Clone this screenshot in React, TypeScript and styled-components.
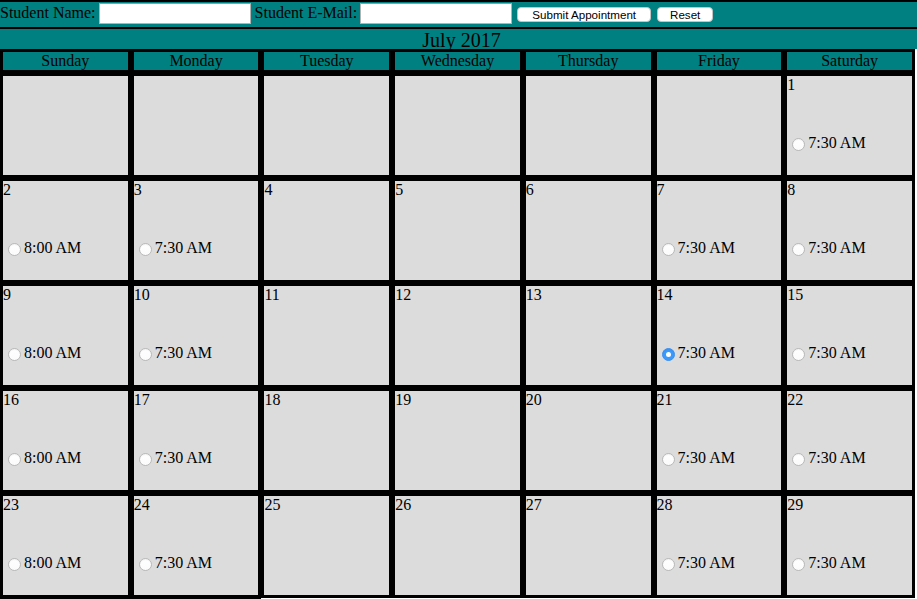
import React, { useState } from "react";
import styled, { createGlobalStyle } from "styled-components";

const GlobalStyle = createGlobalStyle`
  html, body {
    margin: 0;
    padding: 0;
    background: #ffffff;
  }
  body {
    font-family: "Liberation Serif", "Times New Roman", serif;
    font-size: 16px;
    color: #000;
  }
`;

const TEAL = "#008080";

const Page = styled.div`
  width: 917px;
`;

const TopBar = styled.form`
  display: flex;
  align-items: flex-start;
  height: 25px;
  background: ${TEAL};
  border-top: 2px solid #000;
  border-bottom: 2px solid #000;
  margin: 0;
`;

const Label = styled.label<{ $ml?: number }>`
  margin-top: 2px;
  margin-left: ${(p) => p.$ml ?? 0}px;
  line-height: 18px;
  white-space: nowrap;
  font-size: 16px;
`;

const TextInput = styled.input<{ $ml?: number }>`
  box-sizing: border-box;
  width: 152px;
  height: 21px;
  margin: 1px 0 0 ${(p) => p.$ml ?? 0}px;
  padding: 0 3px;
  border: 1px solid #b3b3b3;
  border-top-color: #9a9a9a;
  background: #fff;
  font-family: "Liberation Serif", serif;
  font-size: 14px;
  outline: none;
`;

const Button = styled.button<{ $w: number; $ml: number }>`
  box-sizing: border-box;
  width: ${(p) => p.$w}px;
  height: 15px;
  margin: 5px 0 0 ${(p) => p.$ml}px;
  padding: 0;
  border: 1px solid #c4c4c4;
  border-radius: 4px;
  background: #ffffff;
  color: #000;
  font-family: "Liberation Sans", Arial, sans-serif;
  font-size: 11.6px;
  line-height: 13px;
  text-align: center;
  cursor: pointer;
`;

const Title = styled.div`
  height: 20px;
  line-height: 23px;
  padding-left: 6px;
  background: ${TEAL};
  text-align: center;
  font-size: 20px;
  overflow: visible;
  position: relative;
  z-index: 1;
`;

const Grid = styled.div`
  display: grid;
  grid-template-columns: repeat(7, 1fr);
  width: 915px;
`;

const HeadCell = styled.div`
  height: 18px;
  line-height: 18px;
  border: 3px solid #000;
  background: ${TEAL};
  text-align: center;
  font-size: 16px;
  overflow: hidden;
  white-space: nowrap;
`;

const DayCell = styled.div`
  height: 99px;
  border: 3px solid #000;
  background: #dcdcdc;
  display: flex;
  flex-direction: column;
  align-items: flex-start;
  overflow: hidden;
`;

const DayNum = styled.div`
  height: 18px;
  line-height: 18px;
  font-size: 16px;
`;

const TimeRow = styled.label`
  display: flex;
  align-items: center;
  height: 19px;
  margin-top: 39px;
  line-height: 19px;
  font-size: 16px;
  white-space: nowrap;
  cursor: pointer;
`;

const Radio = styled.input.attrs({ type: "radio" })`
  appearance: none;
  -webkit-appearance: none;
  box-sizing: border-box;
  width: 13px;
  height: 13px;
  margin: 4px 3px 0 5px;
  border-radius: 50%;
  border: 1px solid #b9b9b9;
  background: linear-gradient(#ffffff, #fbfbfb);
  box-shadow: inset 0 1px 1px rgba(0, 0, 0, 0.05);
  position: relative;
  flex: none;
  cursor: pointer;

  &:checked {
    border-color: #3b8ff0;
    background: #3b99fc;
  }
  &:checked::after {
    content: "";
    position: absolute;
    left: 50%;
    top: 50%;
    width: 5px;
    height: 5px;
    margin: -2.5px 0 0 -2.5px;
    border-radius: 50%;
    background: #fff;
  }
`;

const DAYS = ["Sunday", "Monday", "Tuesday", "Wednesday", "Thursday", "Friday", "Saturday"];
const TIMES: Record<number, string | null> = {
  0: "8:00 AM",
  1: "7:30 AM",
  2: null,
  3: null,
  4: null,
  5: "7:30 AM",
  6: "7:30 AM",
};

type Cell = { day: number | null; weekday: number };

function buildCells(): Cell[] {
  const cells: Cell[] = [];
  const firstWeekday = 6; // July 1, 2017 is Saturday
  for (let i = 0; i < firstWeekday; i++) cells.push({ day: null, weekday: i });
  for (let d = 1; d <= 31; d++) {
    cells.push({ day: d, weekday: (firstWeekday + d - 1) % 7 });
  }
  return cells;
}

export default function App() {
  const [selected, setSelected] = useState<number>(14);
  const cells = buildCells();

  return (
    <Page>
      <GlobalStyle />
      <TopBar onSubmit={(e) => e.preventDefault()}>
        <Label htmlFor="sname">Student Name:</Label>
        <TextInput id="sname" type="text" $ml={3} />
        <Label htmlFor="semail" $ml={4}>
          Student E-Mail:
        </Label>
        <TextInput id="semail" type="text" $ml={3} />
        <Button type="submit" $w={134} $ml={5}>
          Submit Appointment
        </Button>
        <Button type="reset" $w={56} $ml={6}>
          Reset
        </Button>
      </TopBar>
      <Title>July 2017</Title>
      <Grid>
        {DAYS.map((d) => (
          <HeadCell key={d}>{d}</HeadCell>
        ))}
        {cells.map((c, i) => {
          const time = c.day !== null ? TIMES[c.weekday] : null;
          return (
            <DayCell key={i}>
              {c.day !== null && <DayNum>{c.day}</DayNum>}
              {c.day !== null && time && (
                <TimeRow>
                  <Radio
                    name="appointment"
                    value={String(c.day)}
                    checked={selected === c.day}
                    onChange={() => setSelected(c.day as number)}
                  />
                  {time}
                </TimeRow>
              )}
            </DayCell>
          );
        })}
      </Grid>
    </Page>
  );
}
